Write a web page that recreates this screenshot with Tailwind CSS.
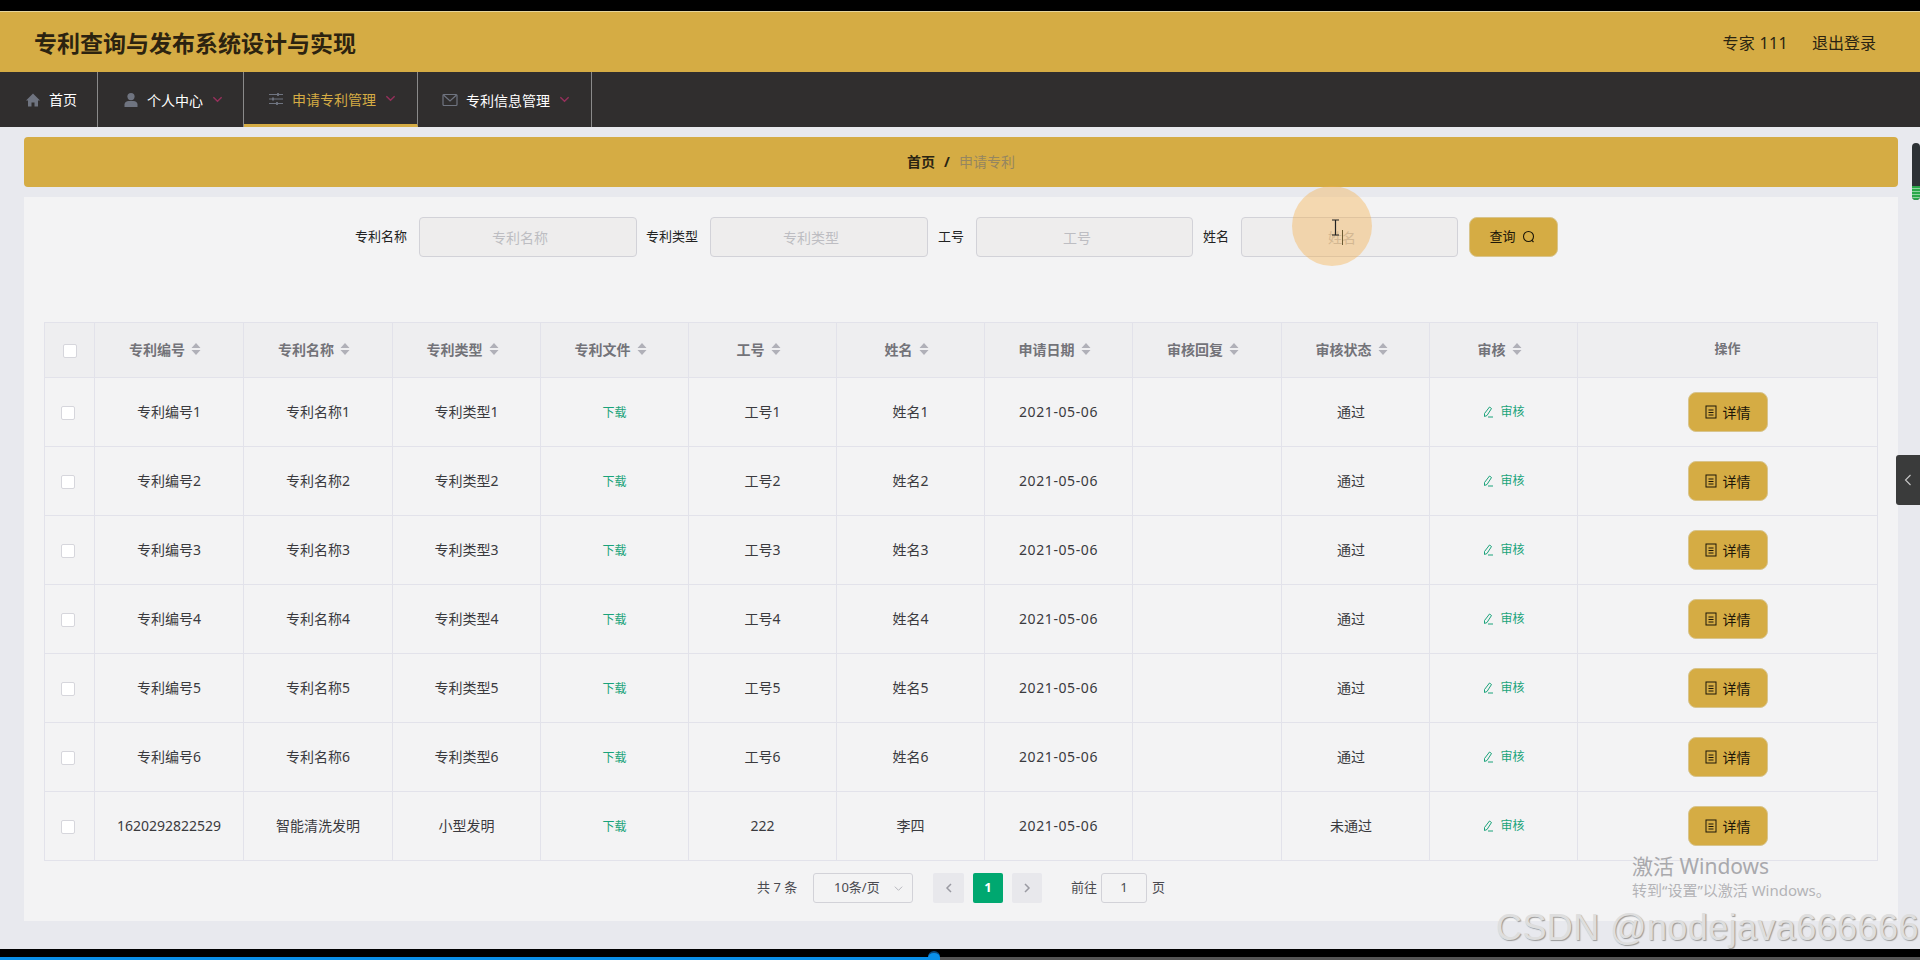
<!doctype html>
<html lang="zh"><head><meta charset="utf-8"><title>专利查询与发布系统设计与实现</title>
<script src="https://cdn.jsdelivr.net/npm/@tailwindcss/browser@4"></script></head>
<body class="bg-black m-0">
<div class="relative w-[1920px] h-[960px] overflow-hidden bg-black font-['Noto_Sans','Noto_Sans_CJK_SC',sans-serif]">
<div class="flex flex-col h-[949px] pt-[11px]">
  <header class="h-[61px] shrink-0 bg-[#d5ac44] border-t border-[#e6d59c] flex items-center justify-between pl-[34px] pr-[44px]">
    <h1 class="text-[23px] font-bold text-[#2c2310] leading-none pt-[2px]">专利查询与发布系统设计与实现</h1>
    <div class="flex gap-6 text-[16px] text-[#2a2412] pt-[1px]"><span class="tracking-[0.3px]">专家 111</span><span>退出登录</span></div>
  </header>
  <nav class="h-[55px] shrink-0 bg-[#302e2e] flex text-[14px] text-white">
    <a class="w-[98px] flex items-center justify-center gap-2 pl-[5px] border-r border-[#8a8a8a]">
      <svg class="w-4 h-4 text-[#6f7480]" viewBox="0 0 16 16" fill="currentColor"><path d="M8 1.500 1 8.500h2v6h3.500v-4h3v4H13v-6h2z"/></svg><span>首页</span></a>
    <a class="w-[146px] flex items-center justify-center gap-2 pl-[5px] pt-[1px] border-r border-[#8a8a8a]">
      <svg class="w-4 h-4 text-[#6f7480]" viewBox="0 0 16 16" fill="currentColor"><circle cx="8" cy="4.600" r="3.600"/><path d="M1.500 15v-2.500C1.500 10.200 3.500 9 5.500 9h5c2 0 4 1.200 4 3.500V15z"/></svg><span>个人中心</span>
      <svg class="w-[11px] h-[11px] text-[#96305c] -mt-[2px] ml-[1px]" viewBox="0 0 12 12" fill="none" stroke="currentColor" stroke-width="1.500"><path d="m1.500 3.500 4.500 4.500 4.500-4.500"/></svg></a>
    <a class="w-[174px] flex items-center justify-center gap-2 pl-[3px] pt-[2px] border-r border-[#8a8a8a] border-b-[3px] border-b-[#d5ac44] text-[#d5ac44]">
      <svg class="w-4 h-4 text-[#6f7480]" viewBox="0 0 16 16" fill="none" stroke="currentColor" stroke-width="1.200"><path d="M1 3.500h14M1 8h14M1 12.500h14"/><path d="M10 2v3M5 6.500v3M9 11v3" stroke-width="1.800"/></svg><span>申请专利管理</span>
      <svg class="w-[11px] h-[11px] text-[#96305c] -mt-[2px] ml-[1px]" viewBox="0 0 12 12" fill="none" stroke="currentColor" stroke-width="1.500"><path d="m1.500 3.500 4.500 4.500 4.500-4.500"/></svg></a>
    <a class="w-[174px] flex items-center justify-center gap-2 pl-[3px] pt-[1px] border-r border-[#8a8a8a]">
      <svg class="w-4 h-4 text-[#6f7480]" viewBox="0 0 16 16" fill="none" stroke="currentColor" stroke-width="1.200"><rect x="1" y="2.500" width="14" height="11" rx="1"/><path d="m1.500 3 6.500 6 6.500-6"/></svg><span>专利信息管理</span>
      <svg class="w-[11px] h-[11px] text-[#96305c] -mt-[2px] ml-[1px]" viewBox="0 0 12 12" fill="none" stroke="currentColor" stroke-width="1.500"><path d="m1.500 3.500 4.500 4.500 4.500-4.500"/></svg></a>
  </nav>
  <main class="flex-1 bg-[#e8e9ee] pl-[24px] pr-[22px] pt-[10px]">
    <div class="h-[50px] rounded-[4px] bg-[#d5ac44] flex items-center justify-center gap-2 text-[14px] font-bold text-[#2a2412] pb-[2px]">
      <span>首页</span><span class="px-[1px]">/</span><span class="font-normal text-[#958660]">申请专利</span>
    </div>
    <section class="mt-[10px] h-[724px] bg-[#f3f3f4] relative pt-[20px]">
      <form class="flex items-center h-[40px] pl-[331px] text-[13px] text-[#222]">
        <label class="mr-3">专利名称</label>
        <div class="w-[218px] h-10 rounded-[4px] border border-[#d2d2d8] bg-[#eeeded] flex items-center pl-[72px] text-[14px] text-[#bdbdc2]">专利名称</div>
        <label class="ml-[9px] mr-3">专利类型</label>
        <div class="w-[218px] h-10 rounded-[4px] border border-[#d2d2d8] bg-[#eeeded] flex items-center pl-[72px] text-[14px] text-[#bdbdc2]">专利类型</div>
        <label class="ml-[10px] mr-3">工号</label>
        <div class="w-[217px] h-10 rounded-[4px] border border-[#d2d2d8] bg-[#eeeded] flex items-center pl-[86px] text-[14px] text-[#bdbdc2]">工号</div>
        <label class="ml-[10px] mr-3">姓名</label>
        <div class="w-[217px] h-10 rounded-[4px] border border-[#d2d2d8] bg-[#eeeded] flex items-center pl-[86px] text-[14px] text-[#bdbdc2]">姓名</div>
        <button type="button" class="ml-[11px] w-[89px] h-10 rounded-[8px] border border-[#d8c48c] bg-[#d5ac44] flex items-center justify-center gap-[6px] pr-[2px] text-[#1c1608] text-[13px]">查询
          <svg class="w-[14px] h-[14px]" viewBox="0 0 14 14" fill="none" stroke="currentColor" stroke-width="1.100"><circle cx="6.500" cy="6.500" r="5"/><path d="m10 10.500 1.500 1.500"/></svg></button>
      </form>
      <table class="absolute left-[20px] top-[125px] w-[1834px] table-fixed border-collapse text-[14px] text-[#3a3a3e] text-center [&_td]:pb-[2px] [&_td:last-child]:pb-0 [&_th]:pb-[2px]">
        <colgroup><col class="w-[50px]"><col class="w-[149px]"><col class="w-[149px]"><col class="w-[148px]"><col class="w-[148px]"><col class="w-[148px]"><col class="w-[148px]"><col class="w-[148px]"><col class="w-[149px]"><col class="w-[148px]"><col class="w-[148px]"><col></colgroup>
        <thead><tr class="h-[55px] bg-[#eeeef0] text-[#737379] text-[14px] font-bold">
          <th class="border border-[#e2e2ea]"><span class="inline-block w-[14px] h-[14px] border border-[#d6d6dc] rounded-[2px] bg-white align-middle"></span></th>
          <th class="border border-[#e2e2ea] pr-[8px]"><span class="inline-flex items-center gap-[6px]">专利编号<svg class="w-[10px] h-[14px] text-[#b0b0b8]" viewBox="0 0 10 14" fill="currentColor"><path d="M5 1 9.500 6H.5zM5 13 .5 8h9z"/></svg></span></th>
          <th class="border border-[#e2e2ea] pr-[8px]"><span class="inline-flex items-center gap-[6px]">专利名称<svg class="w-[10px] h-[14px] text-[#b0b0b8]" viewBox="0 0 10 14" fill="currentColor"><path d="M5 1 9.500 6H.5zM5 13 .5 8h9z"/></svg></span></th>
          <th class="border border-[#e2e2ea] pr-[8px]"><span class="inline-flex items-center gap-[6px]">专利类型<svg class="w-[10px] h-[14px] text-[#b0b0b8]" viewBox="0 0 10 14" fill="currentColor"><path d="M5 1 9.500 6H.5zM5 13 .5 8h9z"/></svg></span></th>
          <th class="border border-[#e2e2ea] pr-[8px]"><span class="inline-flex items-center gap-[6px]">专利文件<svg class="w-[10px] h-[14px] text-[#b0b0b8]" viewBox="0 0 10 14" fill="currentColor"><path d="M5 1 9.500 6H.5zM5 13 .5 8h9z"/></svg></span></th>
          <th class="border border-[#e2e2ea] pr-[8px]"><span class="inline-flex items-center gap-[6px]">工号<svg class="w-[10px] h-[14px] text-[#b0b0b8]" viewBox="0 0 10 14" fill="currentColor"><path d="M5 1 9.500 6H.5zM5 13 .5 8h9z"/></svg></span></th>
          <th class="border border-[#e2e2ea] pr-[8px]"><span class="inline-flex items-center gap-[6px]">姓名<svg class="w-[10px] h-[14px] text-[#b0b0b8]" viewBox="0 0 10 14" fill="currentColor"><path d="M5 1 9.500 6H.5zM5 13 .5 8h9z"/></svg></span></th>
          <th class="border border-[#e2e2ea] pr-[8px]"><span class="inline-flex items-center gap-[6px]">申请日期<svg class="w-[10px] h-[14px] text-[#b0b0b8]" viewBox="0 0 10 14" fill="currentColor"><path d="M5 1 9.500 6H.5zM5 13 .5 8h9z"/></svg></span></th>
          <th class="border border-[#e2e2ea] pr-[8px]"><span class="inline-flex items-center gap-[6px]">审核回复<svg class="w-[10px] h-[14px] text-[#b0b0b8]" viewBox="0 0 10 14" fill="currentColor"><path d="M5 1 9.500 6H.5zM5 13 .5 8h9z"/></svg></span></th>
          <th class="border border-[#e2e2ea] pr-[8px]"><span class="inline-flex items-center gap-[6px]">审核状态<svg class="w-[10px] h-[14px] text-[#b0b0b8]" viewBox="0 0 10 14" fill="currentColor"><path d="M5 1 9.500 6H.5zM5 13 .5 8h9z"/></svg></span></th>
          <th class="border border-[#e2e2ea] pr-[8px]"><span class="inline-flex items-center gap-[6px]">审核<svg class="w-[10px] h-[14px] text-[#b0b0b8]" viewBox="0 0 10 14" fill="currentColor"><path d="M5 1 9.500 6H.5zM5 13 .5 8h9z"/></svg></span></th>
          <th class="border border-[#e2e2ea] text-[13px]">操作</th>
        </tr></thead>
        <tbody>
          <tr class="h-[69px]"><td class="border border-[#e2e2ea] pr-1"><span class="inline-block w-[14px] h-[14px] border border-[#d6d6dc] rounded-[2px] bg-white align-middle"></span></td><td class="border border-[#e2e2ea]">专利编号1</td><td class="border border-[#e2e2ea]">专利名称1</td><td class="border border-[#e2e2ea]">专利类型1</td><td class="border border-[#e2e2ea] text-[12px] text-[#1aa37a] pt-[3px]">下载</td><td class="border border-[#e2e2ea]">工号1</td><td class="border border-[#e2e2ea]">姓名1</td><td class="border border-[#e2e2ea] tracking-[0.6px]">2021-05-06</td><td class="border border-[#e2e2ea]"></td><td class="border border-[#e2e2ea] pr-[9px]">通过</td><td class="border border-[#e2e2ea] text-[12px] text-[#1aa37a] pt-[3px]"><span class="inline-flex items-center gap-[6px]"><svg class="w-3 h-3" viewBox="0 0 12 12" fill="none" stroke="currentColor" stroke-width="1"><path d="M7.500 1 9.500 2.500 5 9.500 2.500 10.500 2.500 7.500zM6 11h5"/></svg>审核</span></td><td class="border border-[#e2e2ea]"><button type="button" class="w-20 h-10 rounded-[8px] border border-[#d8c48c] bg-[#d5ac44] inline-flex items-center justify-center gap-[6px] text-[#1c1608] align-middle"><svg class="w-3 h-[14px]" viewBox="0 0 12 14" fill="none" stroke="currentColor" stroke-width="1"><rect x="1" y="1" width="10" height="12"/><path d="M3.500 5h5M3.500 7.500h5M3.500 10h5"/></svg>详情</button></td></tr>
          <tr class="h-[69px]"><td class="border border-[#e2e2ea] pr-1"><span class="inline-block w-[14px] h-[14px] border border-[#d6d6dc] rounded-[2px] bg-white align-middle"></span></td><td class="border border-[#e2e2ea]">专利编号2</td><td class="border border-[#e2e2ea]">专利名称2</td><td class="border border-[#e2e2ea]">专利类型2</td><td class="border border-[#e2e2ea] text-[12px] text-[#1aa37a] pt-[3px]">下载</td><td class="border border-[#e2e2ea]">工号2</td><td class="border border-[#e2e2ea]">姓名2</td><td class="border border-[#e2e2ea] tracking-[0.6px]">2021-05-06</td><td class="border border-[#e2e2ea]"></td><td class="border border-[#e2e2ea] pr-[9px]">通过</td><td class="border border-[#e2e2ea] text-[12px] text-[#1aa37a] pt-[3px]"><span class="inline-flex items-center gap-[6px]"><svg class="w-3 h-3" viewBox="0 0 12 12" fill="none" stroke="currentColor" stroke-width="1"><path d="M7.500 1 9.500 2.500 5 9.500 2.500 10.500 2.500 7.500zM6 11h5"/></svg>审核</span></td><td class="border border-[#e2e2ea]"><button type="button" class="w-20 h-10 rounded-[8px] border border-[#d8c48c] bg-[#d5ac44] inline-flex items-center justify-center gap-[6px] text-[#1c1608] align-middle"><svg class="w-3 h-[14px]" viewBox="0 0 12 14" fill="none" stroke="currentColor" stroke-width="1"><rect x="1" y="1" width="10" height="12"/><path d="M3.500 5h5M3.500 7.500h5M3.500 10h5"/></svg>详情</button></td></tr>
          <tr class="h-[69px]"><td class="border border-[#e2e2ea] pr-1"><span class="inline-block w-[14px] h-[14px] border border-[#d6d6dc] rounded-[2px] bg-white align-middle"></span></td><td class="border border-[#e2e2ea]">专利编号3</td><td class="border border-[#e2e2ea]">专利名称3</td><td class="border border-[#e2e2ea]">专利类型3</td><td class="border border-[#e2e2ea] text-[12px] text-[#1aa37a] pt-[3px]">下载</td><td class="border border-[#e2e2ea]">工号3</td><td class="border border-[#e2e2ea]">姓名3</td><td class="border border-[#e2e2ea] tracking-[0.6px]">2021-05-06</td><td class="border border-[#e2e2ea]"></td><td class="border border-[#e2e2ea] pr-[9px]">通过</td><td class="border border-[#e2e2ea] text-[12px] text-[#1aa37a] pt-[3px]"><span class="inline-flex items-center gap-[6px]"><svg class="w-3 h-3" viewBox="0 0 12 12" fill="none" stroke="currentColor" stroke-width="1"><path d="M7.500 1 9.500 2.500 5 9.500 2.500 10.500 2.500 7.500zM6 11h5"/></svg>审核</span></td><td class="border border-[#e2e2ea]"><button type="button" class="w-20 h-10 rounded-[8px] border border-[#d8c48c] bg-[#d5ac44] inline-flex items-center justify-center gap-[6px] text-[#1c1608] align-middle"><svg class="w-3 h-[14px]" viewBox="0 0 12 14" fill="none" stroke="currentColor" stroke-width="1"><rect x="1" y="1" width="10" height="12"/><path d="M3.500 5h5M3.500 7.500h5M3.500 10h5"/></svg>详情</button></td></tr>
          <tr class="h-[69px]"><td class="border border-[#e2e2ea] pr-1"><span class="inline-block w-[14px] h-[14px] border border-[#d6d6dc] rounded-[2px] bg-white align-middle"></span></td><td class="border border-[#e2e2ea]">专利编号4</td><td class="border border-[#e2e2ea]">专利名称4</td><td class="border border-[#e2e2ea]">专利类型4</td><td class="border border-[#e2e2ea] text-[12px] text-[#1aa37a] pt-[3px]">下载</td><td class="border border-[#e2e2ea]">工号4</td><td class="border border-[#e2e2ea]">姓名4</td><td class="border border-[#e2e2ea] tracking-[0.6px]">2021-05-06</td><td class="border border-[#e2e2ea]"></td><td class="border border-[#e2e2ea] pr-[9px]">通过</td><td class="border border-[#e2e2ea] text-[12px] text-[#1aa37a] pt-[3px]"><span class="inline-flex items-center gap-[6px]"><svg class="w-3 h-3" viewBox="0 0 12 12" fill="none" stroke="currentColor" stroke-width="1"><path d="M7.500 1 9.500 2.500 5 9.500 2.500 10.500 2.500 7.500zM6 11h5"/></svg>审核</span></td><td class="border border-[#e2e2ea]"><button type="button" class="w-20 h-10 rounded-[8px] border border-[#d8c48c] bg-[#d5ac44] inline-flex items-center justify-center gap-[6px] text-[#1c1608] align-middle"><svg class="w-3 h-[14px]" viewBox="0 0 12 14" fill="none" stroke="currentColor" stroke-width="1"><rect x="1" y="1" width="10" height="12"/><path d="M3.500 5h5M3.500 7.500h5M3.500 10h5"/></svg>详情</button></td></tr>
          <tr class="h-[69px]"><td class="border border-[#e2e2ea] pr-1"><span class="inline-block w-[14px] h-[14px] border border-[#d6d6dc] rounded-[2px] bg-white align-middle"></span></td><td class="border border-[#e2e2ea]">专利编号5</td><td class="border border-[#e2e2ea]">专利名称5</td><td class="border border-[#e2e2ea]">专利类型5</td><td class="border border-[#e2e2ea] text-[12px] text-[#1aa37a] pt-[3px]">下载</td><td class="border border-[#e2e2ea]">工号5</td><td class="border border-[#e2e2ea]">姓名5</td><td class="border border-[#e2e2ea] tracking-[0.6px]">2021-05-06</td><td class="border border-[#e2e2ea]"></td><td class="border border-[#e2e2ea] pr-[9px]">通过</td><td class="border border-[#e2e2ea] text-[12px] text-[#1aa37a] pt-[3px]"><span class="inline-flex items-center gap-[6px]"><svg class="w-3 h-3" viewBox="0 0 12 12" fill="none" stroke="currentColor" stroke-width="1"><path d="M7.500 1 9.500 2.500 5 9.500 2.500 10.500 2.500 7.500zM6 11h5"/></svg>审核</span></td><td class="border border-[#e2e2ea]"><button type="button" class="w-20 h-10 rounded-[8px] border border-[#d8c48c] bg-[#d5ac44] inline-flex items-center justify-center gap-[6px] text-[#1c1608] align-middle"><svg class="w-3 h-[14px]" viewBox="0 0 12 14" fill="none" stroke="currentColor" stroke-width="1"><rect x="1" y="1" width="10" height="12"/><path d="M3.500 5h5M3.500 7.500h5M3.500 10h5"/></svg>详情</button></td></tr>
          <tr class="h-[69px]"><td class="border border-[#e2e2ea] pr-1"><span class="inline-block w-[14px] h-[14px] border border-[#d6d6dc] rounded-[2px] bg-white align-middle"></span></td><td class="border border-[#e2e2ea]">专利编号6</td><td class="border border-[#e2e2ea]">专利名称6</td><td class="border border-[#e2e2ea]">专利类型6</td><td class="border border-[#e2e2ea] text-[12px] text-[#1aa37a] pt-[3px]">下载</td><td class="border border-[#e2e2ea]">工号6</td><td class="border border-[#e2e2ea]">姓名6</td><td class="border border-[#e2e2ea] tracking-[0.6px]">2021-05-06</td><td class="border border-[#e2e2ea]"></td><td class="border border-[#e2e2ea] pr-[9px]">通过</td><td class="border border-[#e2e2ea] text-[12px] text-[#1aa37a] pt-[3px]"><span class="inline-flex items-center gap-[6px]"><svg class="w-3 h-3" viewBox="0 0 12 12" fill="none" stroke="currentColor" stroke-width="1"><path d="M7.500 1 9.500 2.500 5 9.500 2.500 10.500 2.500 7.500zM6 11h5"/></svg>审核</span></td><td class="border border-[#e2e2ea]"><button type="button" class="w-20 h-10 rounded-[8px] border border-[#d8c48c] bg-[#d5ac44] inline-flex items-center justify-center gap-[6px] text-[#1c1608] align-middle"><svg class="w-3 h-[14px]" viewBox="0 0 12 14" fill="none" stroke="currentColor" stroke-width="1"><rect x="1" y="1" width="10" height="12"/><path d="M3.500 5h5M3.500 7.500h5M3.500 10h5"/></svg>详情</button></td></tr>
          <tr class="h-[69px]"><td class="border border-[#e2e2ea] pr-1"><span class="inline-block w-[14px] h-[14px] border border-[#d6d6dc] rounded-[2px] bg-white align-middle"></span></td><td class="border border-[#e2e2ea]">1620292822529</td><td class="border border-[#e2e2ea]">智能清洗发明</td><td class="border border-[#e2e2ea]">小型发明</td><td class="border border-[#e2e2ea] text-[12px] text-[#1aa37a] pt-[3px]">下载</td><td class="border border-[#e2e2ea]">222</td><td class="border border-[#e2e2ea]">李四</td><td class="border border-[#e2e2ea] tracking-[0.6px]">2021-05-06</td><td class="border border-[#e2e2ea]"></td><td class="border border-[#e2e2ea] pr-[9px]">未通过</td><td class="border border-[#e2e2ea] text-[12px] text-[#1aa37a] pt-[3px]"><span class="inline-flex items-center gap-[6px]"><svg class="w-3 h-3" viewBox="0 0 12 12" fill="none" stroke="currentColor" stroke-width="1"><path d="M7.500 1 9.500 2.500 5 9.500 2.500 10.500 2.500 7.500zM6 11h5"/></svg>审核</span></td><td class="border border-[#e2e2ea]"><button type="button" class="w-20 h-10 rounded-[8px] border border-[#d8c48c] bg-[#d5ac44] inline-flex items-center justify-center gap-[6px] text-[#1c1608] align-middle"><svg class="w-3 h-[14px]" viewBox="0 0 12 14" fill="none" stroke="currentColor" stroke-width="1"><rect x="1" y="1" width="10" height="12"/><path d="M3.500 5h5M3.500 7.500h5M3.500 10h5"/></svg>详情</button></td></tr>
        </tbody>
      </table>
      <div class="absolute left-[733px] top-[676px] h-[30px] flex items-center text-[13px] text-[#4a4a50]">
        <span class="w-[41px]">共 7 条</span>
        <div class="ml-[15px] w-[100px] h-[30px] rounded-[3px] border border-[#d2d2d8] flex items-center justify-between pl-5 pr-[8px]"><span>10条/页</span><svg class="w-[11px] h-[11px] text-[#b0b0b8]" viewBox="0 0 12 12" fill="none" stroke="currentColor"><path d="m2 4 4 4 4-4"/></svg></div>
        <div class="ml-[20px] w-[31px] h-[30px] rounded-[2px] bg-[#e8e8ec] flex items-center justify-center"><svg class="w-3 h-3 text-[#9a9aa2]" viewBox="0 0 12 12" fill="none" stroke="currentColor" stroke-width="1.500"><path d="M8 2 4 6l4 4"/></svg></div>
        <div class="ml-[9px] w-[30px] h-[30px] rounded-[2px] bg-[#00a870] text-white font-bold flex items-center justify-center">1</div>
        <div class="ml-[9px] w-[30px] h-[30px] rounded-[2px] bg-[#e8e8ec] flex items-center justify-center"><svg class="w-3 h-3 text-[#9a9aa2]" viewBox="0 0 12 12" fill="none" stroke="currentColor" stroke-width="1.500"><path d="m4 2 4 4-4 4"/></svg></div>
        <span class="ml-[29px]">前往</span>
        <div class="ml-[4px] w-[46px] h-[30px] rounded-[3px] border border-[#d2d2d8] flex items-center justify-center">1</div>
        <span class="ml-[5px]">页</span>
      </div>
    </section>
  </main>
</div>
<div class="absolute left-[1292px] top-[186px] w-[80px] h-[80px] rounded-full bg-[#f5b04a]/40"></div>
<svg class="absolute left-[1331px] top-[219px] w-[9px] h-[17px] text-[#222]" viewBox="0 0 9 17" fill="none" stroke="currentColor" stroke-width="1.200"><path d="M1 1h7M4.500 1v15M1 16h7"/></svg>
<div class="absolute left-[1342px] top-[230px] w-px h-[15px] bg-[#6b5a30]"></div>
<div class="absolute left-[1912px] top-[143px] w-[8px] h-[57px] rounded-[4px] bg-[#2c3135] overflow-hidden flex flex-col justify-end"><div class="h-[14px] bg-[repeating-linear-gradient(180deg,#2aa84a_0,#2aa84a_2px,#8fd4a0_2px,#8fd4a0_3px)]"></div></div>
<div class="absolute left-[1896px] top-[455px] w-[24px] h-[50px] rounded-l-[3px] bg-[#3a3b3b] flex items-center justify-center"><svg class="w-3 h-[14px] text-[#c8c8c8]" viewBox="0 0 12 14" fill="none" stroke="currentColor" stroke-width="1.100"><path d="M8.500 2 3.500 7l5 5"/></svg></div>
<div class="absolute left-[1632px] top-[852px] text-[21px] leading-7 text-[#a9a9ad]">激活 Windows</div>
<div class="absolute left-[1632px] top-[880px] text-[15px] leading-5 text-[#b3b3b7]">转到“设置”以激活 Windows。</div>
<div class="absolute left-[1496px] top-[908px] whitespace-nowrap text-[36px] leading-10 font-['Liberation_Sans',sans-serif] tracking-[0.4px] text-[#dedede] [text-shadow:1px_1px_1px_#9a9a9a]">CSDN @nodejava666666</div>
<div class="absolute left-0 bottom-0 w-full h-[3px] bg-[#555]"><div class="h-full w-[934px] bg-[#0a8fe8]"></div></div>
<div class="absolute left-[928px] bottom-0 w-[12px] h-[9px] rounded-t-full bg-[#0a8fe8] border-t-2 border-[#0a4a80]"></div>
</div>
</body></html>
